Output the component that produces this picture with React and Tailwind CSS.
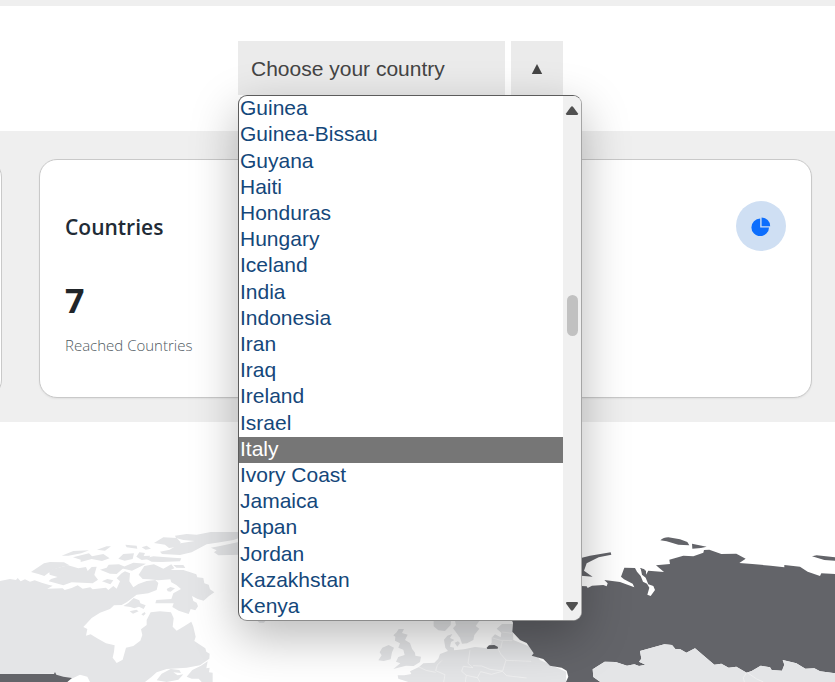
import React from "react";

const countries = [
  "Guinea", "Guinea-Bissau", "Guyana", "Haiti", "Honduras", "Hungary", "Iceland",
  "India", "Indonesia", "Iran", "Iraq", "Ireland", "Israel", "Italy", "Ivory Coast",
  "Jamaica", "Japan", "Jordan", "Kazakhstan", "Kenya",
];

function CountryList() {
  return (
    <div className="absolute left-0 top-[54px] z-10 flex h-[526px] w-[344px] overflow-hidden rounded-[9px] border border-b-[#8c8c8c] border-l-[#5c5c5c] border-r-[#a5a5a5] border-t-[#5c5c5c] bg-white shadow-[0_16px_48px_rgba(0,0,0,0.28)]">
      <ul role="listbox" aria-label="Countries" className="flex flex-1 flex-col">
        {countries.map((name) => (
          <li
            key={name}
            role="option"
            aria-selected={name === "Italy"}
            className="flex flex-1 items-center pb-[2px] pl-px text-[21px] leading-6 text-[#14477a] aria-selected:bg-[#767676] aria-selected:text-white"
          >
            {name}
          </li>
        ))}
      </ul>
      <div className="flex w-[18px] flex-col items-center justify-between bg-[#f0f0f0] pb-2 pt-[9px]">
        <svg width="14" height="11" viewBox="0 0 14 11" aria-hidden="true">
          <path d="M1.2 8.2 L5.8 2 Q7 .4 8.2 2 L12.8 8.2 Q13.6 10 12 10 H2 Q.4 10 1.2 8.2Z" fill="#505050" />
        </svg>
        <div className="mb-[86px] h-[41px] w-[11px] rounded-full bg-[#c1c1c1]" />
        <svg width="14" height="11" viewBox="0 0 14 11" aria-hidden="true">
          <path d="M1.2 2.8 Q.4 1 2 1 H12 Q13.6 1 12.8 2.8 L8.2 9 Q7 10.6 5.8 9Z" fill="#505050" />
        </svg>
      </div>
    </div>
  );
}

function CountryPicker() {
  return (
    <div className="relative flex gap-[6px]">
      <select
        aria-label="Country"
        defaultValue=""
        className="h-[54px] w-[267px] appearance-none bg-[#ebebeb] px-[13px] pt-px text-[21px] text-[#444]"
      >
        <option value="">Choose your country</option>
        {countries.map((name) => (
          <option key={name}>{name}</option>
        ))}
      </select>
      <button type="button" aria-label="Close country list" className="flex h-[54px] w-[52px] items-center justify-center bg-[#ebebeb] pt-px">
        <svg width="12" height="12" viewBox="0 0 12 12" aria-hidden="true">
          <path d="M6 1 L11.2 11 H.8Z" fill="#444" />
        </svg>
      </button>
      <CountryList />
    </div>
  );
}

function StatCard() {
  return (
    <article className="flex flex-1 items-start justify-between rounded-[18px] border border-[#c9c9c9] bg-white px-[25px] pb-10 pt-[41px] shadow-[0_1px_2px_rgba(0,0,0,0.06)]">
      <div className="font-['Open_Sans',sans-serif]">
        <h2 className="pt-2 text-[21px] font-semibold leading-9 text-[#212b36]">Countries</h2>
        <p className="pt-8 text-[34px] font-bold leading-[46px] text-[#212529]">7</p>
        <p className="pt-[10px] text-[15px] font-light leading-6 text-[#505a62]">Reached Countries</p>
      </div>
      <div className="flex size-[50px] items-center justify-center rounded-full bg-[#cfdff3]">
        <svg width="20" height="20" viewBox="0 0 20 20" aria-hidden="true" fill="#0d6efd">
          <path d="M9.2 2.6 V11.4 H18 A8.8 8.8 0 1 1 9.2 2.6Z" />
          <path d="M10.6 1.6 A8.6 8.6 0 0 1 19.2 10.2 H10.6Z" />
        </svg>
      </div>
    </article>
  );
}

function WorldMap() {
  return (
    <svg viewBox="0 422 835 260" className="block h-auto w-full" role="img" aria-label="World map">
      <g transform="translate(0 510) scale(0.33333)">
        <g fill="#e4e5e7">
          <path d="M0 213 L30 207 L48 210 L53 204 L62 214 L75 208 L90 215 L104 211 L125 218 L145 224 L158 227 L142 236 L188 235 L194 240 L215 234 L233 226 L248 236 L271 232 L278 238 L318 233 L325 240 L340 228 L350 236 L360 214 L350 205 L365 190 L375 184 L390 190 L388 214 L400 232 L415 222 L440 213 L466 210 L475 219 L470 240 L445 250 L428 252 L410 254 L400 262 L380 277 L365 285 L342 286 L330 297 L300 308 L275 324 L250 351 L262 357 L258 377 L272 373 L290 384 L318 400 L344 406 L342 425 L338 443 L350 459 L368 449 L378 413 L400 408 L421 392 L427 375 L423 358 L440 345 L440 330 L452 307 L480 304 L513 307 L521 325 L518 350 L530 362 L550 350 L574 335 L580 350 L587 380 L583 393 L600 404 L616 415 L619 425 L629 431 L628 446 L600 466 L560 473 L500 477 L470 487 L455 500 L435 516 L270 516 L262 500 L240 494 L215 506 L175 500 L164 491 L0 493Z" />
          <path d="M93 186 L132 160 L150 156 L192 157 L208 166 L187 170 L158 179 L133 198 L115 192Z" />
          <path d="M147 181 L204 166 L235 175 L258 171 L263 183 L275 171 L290 170 L283 195 L294 209 L278 220 L215 217 L190 226 L163 218 L146 214 L153 207 L173 201 L149 194Z" />
          <path d="M185 137 L220 123 L267 121 L244 130 L205 137Z M219 142 L267 130 L276 139 L310 132 L329 145 L306 153 L275 147 L242 156 L242 149Z M291 119 L320 109 L333 109 L315 122Z" />
          <path d="M355 146 L370 132 L402 130 L398 147 L374 152Z M376 104 L410 107 L412 116 L380 112Z M409 140 L418 127 L435 129 L431 138 L451 137 L444 148 L425 150Z M425 112 L440 107 L453 116 L437 119Z" />
          <path d="M300 179 L320 173 L326 164 L357 163 L375 170 L350 192 L330 191Z M362 174 L400 158 L438 161 L425 168 L396 182Z M306 214 L322 207 L340 211 L331 223Z" />
          <path d="M435 145 L460 139 L520 143 L544 145 L540 154 L485 156 L455 155Z M462 99 L490 82 L530 84 L542 97 L536 110 L507 114 L495 104Z" />
          <path d="M525 77 L560 72 L590 74 L632 66 L720 66 L720 83 L700 90 L660 97 L620 103 L575 127 L540 135 L486 132 L480 125 L509 119 L541 100 L584 93 L550 90 L528 84Z M633 113 L660 108 L720 95 L720 134 L655 136 L642 127 L650 121Z" />
          <path d="M416 194 L433 168 L462 163 L490 176 L514 163 L523 175 L512 180 L550 180 L571 187 L589 193 L592 202 L610 204 L613 220 L626 224 L630 238 L643 247 L627 258 L611 272 L593 267 L576 258 L580 273 L590 278 L594 289 L586 301 L572 297 L566 312 L536 302 L517 291 L521 280 L466 280 L469 270 L514 267 L520 250 L543 237 L529 225 L514 217 L511 208 L475 211 L447 208 L428 207Z" />
          <path d="M520 165 L550 165 L556 174 L529 173Z M500 237 L511 231 L525 235 L512 245 L503 244Z M370 288 L385 279 L401 264 L418 271 L421 280 L437 286 L431 297 L417 290 L403 295 L391 291Z M389 304 L409 299 L416 304 L399 311Z M424 313 L434 306 L437 311 L430 317Z" />
          <path d="M560 500 L577 480 L603 467 L623 454 L619 475 L629 473 L627 487 L638 488 L638 516 L605 516 L596 506 L575 506Z M470 511 L485 491 L512 477 L538 480 L543 489 L520 487 L533 496 L550 493 L535 509 L500 516Z" />
        </g>
        <path d="M0 492 L162 492 L165 486 L169 494 L190 500 L216 504 L202 516 L0 516Z" fill="#636469" />
      </g>
      <g transform="translate(230 560) scale(0.33333)">
        <g fill="#e4e5e7">
          <path d="M80 180 L108 180 L102 188 L88 188Z M500 217 L506 207 L522 207 L516 219 L533 224 L525 240 L540 249 L546 266 L555 278 L556 287 L573 290 L570 306 L551 318 L528 317 L490 327 L511 310 L498 305 L505 291 L524 285 L520 269 L505 263 L510 250 L495 242 L496 230 L490 226Z" />
          <path d="M445 301 L455 286 L449 277 L457 263 L476 255 L492 263 L486 277 L482 298 L461 303Z M611 150 L665 150 L662 195 L645 213 L625 211 L611 199Z" />
          <path d="M667 150 L750 150 L750 180 L737 198 L748 206 L733 225 L730 240 L711 250 L696 251 L690 233 L677 215 L669 205 L678 195Z M674 248 L684 244 L690 249 L682 260Z" />
          <path d="M642 239 L652 227 L667 222 L660 234 L673 240 L663 246 L660 260 L672 263 L672 271 L702 268 L735 261 L774 265 L785 248 L785 233 L795 223 L812 232 L814 218 L800 206 L816 192 L848 192 L850 240 L900 260 L930 300 L1008 335 L1008 366 L535 366 L505 356 L503 346 L523 346 L544 342 L540 334 L567 321 L580 310 L613 308 L625 296 L630 282 L654 273 L646 263Z" />
        </g>
        <path d="M636 301 L622 315 L617 332 L645 344 L641 366 M720 270 L714 310 L729 323 L700 319 L695 334 L709 346 L706 366 M729 317 L755 318 L780 328 L817 333 M774 265 L804 266 L813 283 L828 300 L818 333 M785 233 L812 241 L847 242 M816 216 L847 220 M828 301 L904 304 M709 346 L742 353 L752 335 L784 343 L817 334 L830 347 L890 354 M742 353 L750 366 M817 243 L812 265 M567 321 L588 331 L617 337" fill="none" stroke="#f4f4f5" strokeWidth="2" />
        <path d="M770 263 L777 256 L793 255 L804 261 L803 266 L772 267Z" fill="#636469" />
      </g>
      <g transform="translate(570 510) scale(0.33333)">
        <g fill="#636469">
          <path d="M-175 330 L33 228 L50 229 L53 234 L66 227 L100 225 L110 229 L113 220 L103 210 L150 216 L193 232 L188 221 L162 208 L153 200 L163 173 L195 174 L201 185 L212 198 L219 215 L231 221 L238 233 L232 254 L242 258 L255 240 L250 228 L235 223 L227 203 L216 194 L212 175 L228 182 L228 194 L235 182 L282 186 L258 166 L300 162 L298 149 L340 137 L370 139 L400 128 L402 120 L418 119 L454 132 L499 131 L527 146 L508 159 L547 162 L602 167 L643 172 L643 165 L690 170 L713 185 L750 198 L754 190 L797 192 L797 490 L750 484 L733 475 L706 476 L679 460 L638 450 L643 464 L636 482 L605 480 L600 472 L572 467 L545 483 L530 488 L499 470 L476 473 L454 461 L433 464 L375 415 L349 428 L331 418 L316 417 L306 405 L283 403 L210 423 L214 446 L207 455 L226 464 L207 468 L193 463 L171 467 L137 456 L104 455 L68 478 L70 501 L91 516 L-12 516 L-5 500 L-10 482 L-25 473 L-60 467 L-80 447 L-115 437 L-109 430 L-130 399 L-150 390 L-173 365 L-171 338Z" />
          <path d="M33 144 L60 137 L122 127 L124 134 L86 142 L50 160 L42 182 L60 195 L68 200 L33 197Z M271 91 Q280 82 295 82 L330 88 L352 96 L358 106 L325 104 L290 94Z M366 101 L410 110 L393 114 L367 116Z M210 174 L224 178 L219 188Z M726 139 L740 136 L797 142 L797 152 L763 150Z" />
        </g>
        <path d="M68 478 L104 455 L137 456 L171 467 L193 463 L207 468 L226 464 L207 455 L214 446 L210 423 L283 403 L306 405 L316 417 L331 418 L349 428 L375 415 L433 464 L454 461 L476 473 L499 470 L530 488 L545 483 L572 467 L600 472 L605 480 L636 482 L643 464 L638 450 L679 460 L706 476 L733 475 L750 484 L797 490 L797 516 L91 516 L70 501Z" fill="#e4e5e7" />
        <path d="M530 488 L520 503 L523 516 M532 488 L560 507 L580 516" fill="none" stroke="#f4f4f5" strokeWidth="2" />
      </g>
    </svg>
  );
}

export default function App() {
  return (
    <div className="min-h-screen overflow-hidden bg-white font-['Liberation_Sans',Arial,sans-serif]">
      <header className="flex justify-center border-t-[6px] border-[#efefef] pb-9 pr-[34px] pt-[35px]">
        <CountryPicker />
      </header>
      <section className="flex gap-[37px] overflow-hidden bg-[#efefef] pb-6 pr-[23px] pt-7">
        <div className="-ml-[38px] w-10 shrink-0 rounded-[18px] border border-[#c9c9c9] bg-white" />
        <StatCard />
      </section>
      <WorldMap />
    </div>
  );
}
